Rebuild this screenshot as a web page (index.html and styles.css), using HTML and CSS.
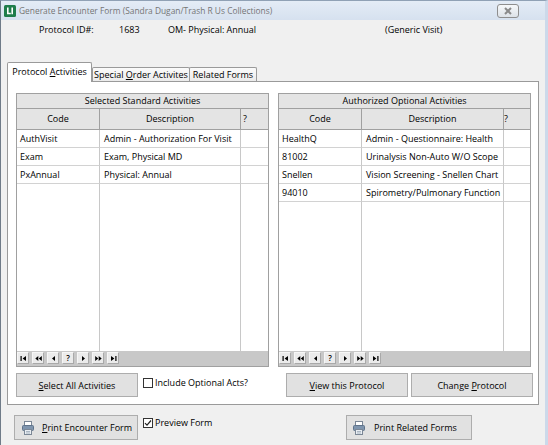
FILE: index.html
```html
<!DOCTYPE html>
<html>
<head>
<meta charset="utf-8">
<title>Generate Encounter Form</title>
<link rel="stylesheet" href="styles.css">
</head>
<body>
<div class="window">
  <div class="titlebar">
    <svg class="app-icon" width="12" height="12" viewBox="0 0 12 12">
      <rect x="0" y="0" width="12" height="12" rx="1.5" fill="#1f7d4b"/>
      <path d="M3 2.5h1.6v5.2h2.2v1.6H3z" fill="#fff"/>
      <path d="M7.4 2.5H9v6.8H7.4z" fill="#fff"/>
    </svg>
    <span class="title">Generate Encounter Form (Sandra Dugan/Trash R Us Collections)</span>
    <div class="close">
      <svg width="10" height="8" viewBox="0 0 10 8"><path d="M2 1L8 7M8 1L2 7" stroke="#8a8a8a" stroke-width="2"/></svg>
    </div>
  </div>

  <div class="info">
    <span>Protocol ID#:</span>
    <span>1683</span>
    <span>OM- Physical: Annual</span>
    <span>(Generic Visit)</span>
  </div>

  <div class="tabctl">
    <div class="tabstrip">
      <div class="tab active tab-a"><span>Protocol <u>A</u>ctivities</span></div>
      <div class="tab tab-b"><span>Special <u>O</u>rder Activites</span></div>
      <div class="tab tab-c"><span>Related Forms</span></div>
    </div>
    <div class="tabpage">
      <div class="grids">
        <div class="grid">
          <div class="caption">Selected Standard Activities</div>
          <div class="cols">
            <div class="ch c1">Code</div>
            <div class="ch c2">Description</div>
            <div class="ch c3">?</div>
          </div>
          <div class="gbody rows3">
            <div class="cell code">AuthVisit</div><div class="cell desc">Admin - Authorization For Visit</div><div class="cell q"></div>
            <div class="cell code">Exam</div><div class="cell desc">Exam, Physical MD</div><div class="cell q"></div>
            <div class="cell code">PxAnnual</div><div class="cell desc">Physical: Annual</div><div class="cell q"></div>
            <div class="fill code"></div><div class="fill desc"></div><div class="fill q"></div>
          </div>
          <div class="nav">
            <div class="nb"><svg width="7" height="5" viewBox="0 0 7 5"><rect x="0.5" y="0" width="1.2" height="5" fill="#000"/><path d="M6 0L2.6 2.5L6 5z" fill="#000"/></svg></div>
            <div class="nb"><svg width="7" height="5" viewBox="0 0 7 5"><path d="M3.3 0L0.3 2.5L3.3 5zM6.8 0L3.8 2.5L6.8 5z" fill="#000"/></svg></div>
            <div class="nb"><svg width="7" height="5" viewBox="0 0 7 5"><path d="M5 0L2 2.5L5 5z" fill="#000"/></svg></div>
            <div class="nb q-btn">?</div>
            <div class="nb"><svg width="7" height="5" viewBox="0 0 7 5"><path d="M2 0L5 2.5L2 5z" fill="#000"/></svg></div>
            <div class="nb"><svg width="7" height="5" viewBox="0 0 7 5"><path d="M0.2 0L3.2 2.5L0.2 5zM3.7 0L6.7 2.5L3.7 5z" fill="#000"/></svg></div>
            <div class="nb"><svg width="7" height="5" viewBox="0 0 7 5"><path d="M1 0L4.4 2.5L1 5z" fill="#000"/><rect x="5.3" y="0" width="1.2" height="5" fill="#000"/></svg></div>
          </div>
        </div>

        <div class="grid">
          <div class="caption">Authorized Optional Activities</div>
          <div class="cols wide">
            <div class="ch c1">Code</div>
            <div class="ch c2">Description</div>
            <div class="ch c3 tight">?</div>
          </div>
          <div class="gbody rows4 wide">
            <div class="cell code">HealthQ</div><div class="cell desc">Admin - Questionnaire: Health</div><div class="cell q"></div>
            <div class="cell code">81002</div><div class="cell desc">Urinalysis Non-Auto W/O Scope</div><div class="cell q"></div>
            <div class="cell code">Snellen</div><div class="cell desc">Vision Screening - Snellen Chart</div><div class="cell q"></div>
            <div class="cell code">94010</div><div class="cell desc">Spirometry/Pulmonary Function</div><div class="cell q"></div>
            <div class="fill code"></div><div class="fill desc"></div><div class="fill q"></div>
          </div>
          <div class="nav">
            <div class="nb"><svg width="7" height="5" viewBox="0 0 7 5"><rect x="0.5" y="0" width="1.2" height="5" fill="#000"/><path d="M6 0L2.6 2.5L6 5z" fill="#000"/></svg></div>
            <div class="nb"><svg width="7" height="5" viewBox="0 0 7 5"><path d="M3.3 0L0.3 2.5L3.3 5zM6.8 0L3.8 2.5L6.8 5z" fill="#000"/></svg></div>
            <div class="nb"><svg width="7" height="5" viewBox="0 0 7 5"><path d="M5 0L2 2.5L5 5z" fill="#000"/></svg></div>
            <div class="nb q-btn">?</div>
            <div class="nb"><svg width="7" height="5" viewBox="0 0 7 5"><path d="M2 0L5 2.5L2 5z" fill="#000"/></svg></div>
            <div class="nb"><svg width="7" height="5" viewBox="0 0 7 5"><path d="M0.2 0L3.2 2.5L0.2 5zM3.7 0L6.7 2.5L3.7 5z" fill="#000"/></svg></div>
            <div class="nb"><svg width="7" height="5" viewBox="0 0 7 5"><path d="M1 0L4.4 2.5L1 5z" fill="#000"/><rect x="5.3" y="0" width="1.2" height="5" fill="#000"/></svg></div>
          </div>
        </div>
      </div>

      <div class="actions">
        <div class="half">
          <div class="btn"><span><u>S</u>elect All Activities</span></div>
          <label class="check">
            <span class="box"></span>
            <span>Include Optional Acts?</span>
          </label>
        </div>
        <div class="half right">
          <div class="btn"><span><u>V</u>iew this Protocol</span></div>
          <div class="btn"><span>Change <u>P</u>rotocol</span></div>
        </div>
      </div>
    </div>
  </div>

  <div class="footer">
    <div class="foot-left">
      <div class="btn pbtn enc">
        <svg class="printer" width="12" height="14" viewBox="0 0 12 14">
          <rect x="2.5" y="0.5" width="7" height="4" fill="#fff" stroke="#7b8796"/>
          <rect x="0.5" y="4.5" width="11" height="5" rx="1" fill="#7f95ae" stroke="#5f738a"/>
          <rect x="2.5" y="8.5" width="7" height="5" fill="#e9eef3" stroke="#7b8796"/>
          <path d="M4 10.5h4M4 12h4" stroke="#9aa7b5" stroke-width="0.8"/>
        </svg>
        <span><u>P</u>rint Encounter Form</span>
      </div>
      <label class="check pcheck">
        <span class="box"><svg width="8" height="8" viewBox="0 0 8 8"><path d="M1 4.2L3 6.2L7 1.5" fill="none" stroke="#222" stroke-width="1.2"/></svg></span>
        <span>Preview Form</span>
      </label>
    </div>
    <div class="btn pbtn rel">
      <svg class="printer" width="12" height="14" viewBox="0 0 12 14">
        <rect x="2.5" y="0.5" width="7" height="4" fill="#fff" stroke="#7b8796"/>
        <rect x="0.5" y="4.5" width="11" height="5" rx="1" fill="#7f95ae" stroke="#5f738a"/>
        <rect x="2.5" y="8.5" width="7" height="5" fill="#e9eef3" stroke="#7b8796"/>
        <path d="M4 10.5h4M4 12h4" stroke="#9aa7b5" stroke-width="0.8"/>
      </svg>
      <span>Print Related Forms</span>
    </div>
  </div>
</div>
</body>
</html>
```

FILE: styles.css
```css
* { box-sizing: border-box; }
html, body { margin: 0; padding: 0; }
body {
  width: 548px;
  height: 445px;
  overflow: hidden;
  background: #f0f0f0;
  font-family: "Open Sans", "Noto Sans", sans-serif;
  font-size: 9px;
  color: #000;
}
u { text-decoration: underline; text-underline-offset: 1px; }

.window {
  width: 548px;
  height: 445px;
  border-left: 1px solid #6f7b88;
  border-right: 3px solid #ccd9ea;
  border-top: 1px solid #90a1b5;
  background: #f0f0f0;
  display: flex;
  flex-direction: column;
}

.titlebar {
  height: 19px;
  flex: none;
  background: linear-gradient(#e4ecf6, #d6e1ef);
  display: flex;
  align-items: center;
  padding-left: 3px;
}
.app-icon { flex: none; margin-right: 3px; }
.title { color: #757575; flex: 1; white-space: nowrap; font-size: 8.4px; }
.close {
  width: 22px;
  height: 14px;
  margin-right: 26px;
  border: 1px solid #8e8e8e;
  border-radius: 3px;
  background: linear-gradient(#f6f8fa, #dde2e8);
  display: flex;
  align-items: center;
  justify-content: center;
}

.info {
  height: 20px;
  flex: none;
  display: grid;
  grid-template-columns: 80px 49px 217px auto;
  padding-left: 38px;
  line-height: 20px;
  white-space: nowrap;
}

.tabctl { margin: 22px 0 0 6px; width: 532px; }
.tabstrip {
  height: 19px;
  display: flex;
  align-items: flex-end;
}
.tab {
  height: 14px;
  border: 1px solid #9a9a9a;
  border-bottom: none;
  border-radius: 2px 2px 0 0;
  background: linear-gradient(#fbfbfb, #ebebeb);
  display: flex;
  align-items: center;
  justify-content: center;
  white-space: nowrap;
  line-height: 12px;
}
.tab.active {
  height: 20px;
  margin-bottom: -1px;
  background: #fff;
  position: relative;
  z-index: 1;
  padding-bottom: 1px;
}
.tab-a { width: 85px; }
.tab-b { width: 98px; }
.tab-c { width: 68px; margin-left: -1px; }

.tabpage {
  height: 324px;
  border: 1px solid #9a9a9a;
  background: #fff;
  padding: 11px 7px 0 8px;
}

.grids { display: flex; gap: 9px; }
.grid {
  width: 253px;
  height: 274px;
  border: 1px solid #a0a0a0;
  display: flex;
  flex-direction: column;
}
.caption {
  height: 15px;
  flex: none;
  background: #e4e4e4;
  border-bottom: 1px solid #a0a0a0;
  text-align: center;
  line-height: 14px;
}
.cols {
  height: 21px;
  flex: none;
  display: grid;
  grid-template-columns: 83px 141px 1fr;
  background: #e4e4e4;
  border-bottom: 1px solid #a0a0a0;
  line-height: 20px;
}
.cols.wide, .gbody.wide { grid-template-columns: 83px 142px 1fr; }
.ch { border-right: 1px solid #a0a0a0; text-align: center; }
.ch.c3 { border-right: none; text-align: left; padding-left: 2px; }
.ch.c3.tight { padding-left: 0; }

.gbody {
  flex: 1;
  display: grid;
  grid-template-columns: 83px 141px 1fr;
  background: #fff;
}
.gbody.rows3 { grid-template-rows: repeat(3, 18px) 1fr; }
.gbody.rows4 { grid-template-rows: repeat(4, 18px) 1fr; }
.cell {
  border-bottom: 1px solid #d2d2d2;
  line-height: 17px;
  white-space: nowrap;
  overflow: hidden;
}
.code, .desc { border-right: 1px solid #c8c8c8; }
.cell.code { padding-left: 3px; }
.cell.desc { padding-left: 4px; }

.nav {
  height: 15px;
  flex: none;
  background: #c8c8c8;
  display: flex;
  gap: 3px;
  padding: 1px 0 0 0;
}
.nb {
  width: 12px;
  height: 12px;
  background: #ebebeb;
  border: 1px solid;
  border-color: #f6f6f6 #a9a9a9 #a9a9a9 #f6f6f6;
  display: flex;
  align-items: center;
  justify-content: center;
}
.nb.q-btn { font-size: 8px; line-height: 10px; font-weight: 600; }

.actions { display: flex; gap: 9px; margin-top: 6px; }
.half { width: 253px; display: flex; align-items: flex-start; flex: none; }
.half.right { padding-left: 8px; gap: 3px; }
.btn {
  height: 24px;
  width: 122px;
  flex: none;
  background: #e1e1e1;
  border: 1px solid #adadad;
  display: flex;
  align-items: center;
  justify-content: center;
  white-space: nowrap;
}

.check {
  display: flex;
  align-items: center;
  gap: 2px;
  margin: 5px 0 0 5px;
  line-height: 10px;
  white-space: nowrap;
}
.box {
  width: 10px;
  height: 10px;
  flex: none;
  border: 1px solid #333;
  background: #fff;
  display: flex;
  align-items: center;
  justify-content: center;
}

.footer {
  display: grid;
  grid-template-columns: 332px 126px;
  margin-top: 10px;
  padding-left: 13px;
}
.foot-left { display: flex; align-items: flex-start; }
.pbtn {
  height: 25px;
  justify-content: flex-start;
  padding-left: 7px;
  gap: 8px;
}
.pbtn.enc { width: 124px; }
.pbtn.rel { width: 126px; padding-left: 6px; gap: 9px; }
.printer { flex: none; }
.pcheck { margin-top: 3px; }
```
